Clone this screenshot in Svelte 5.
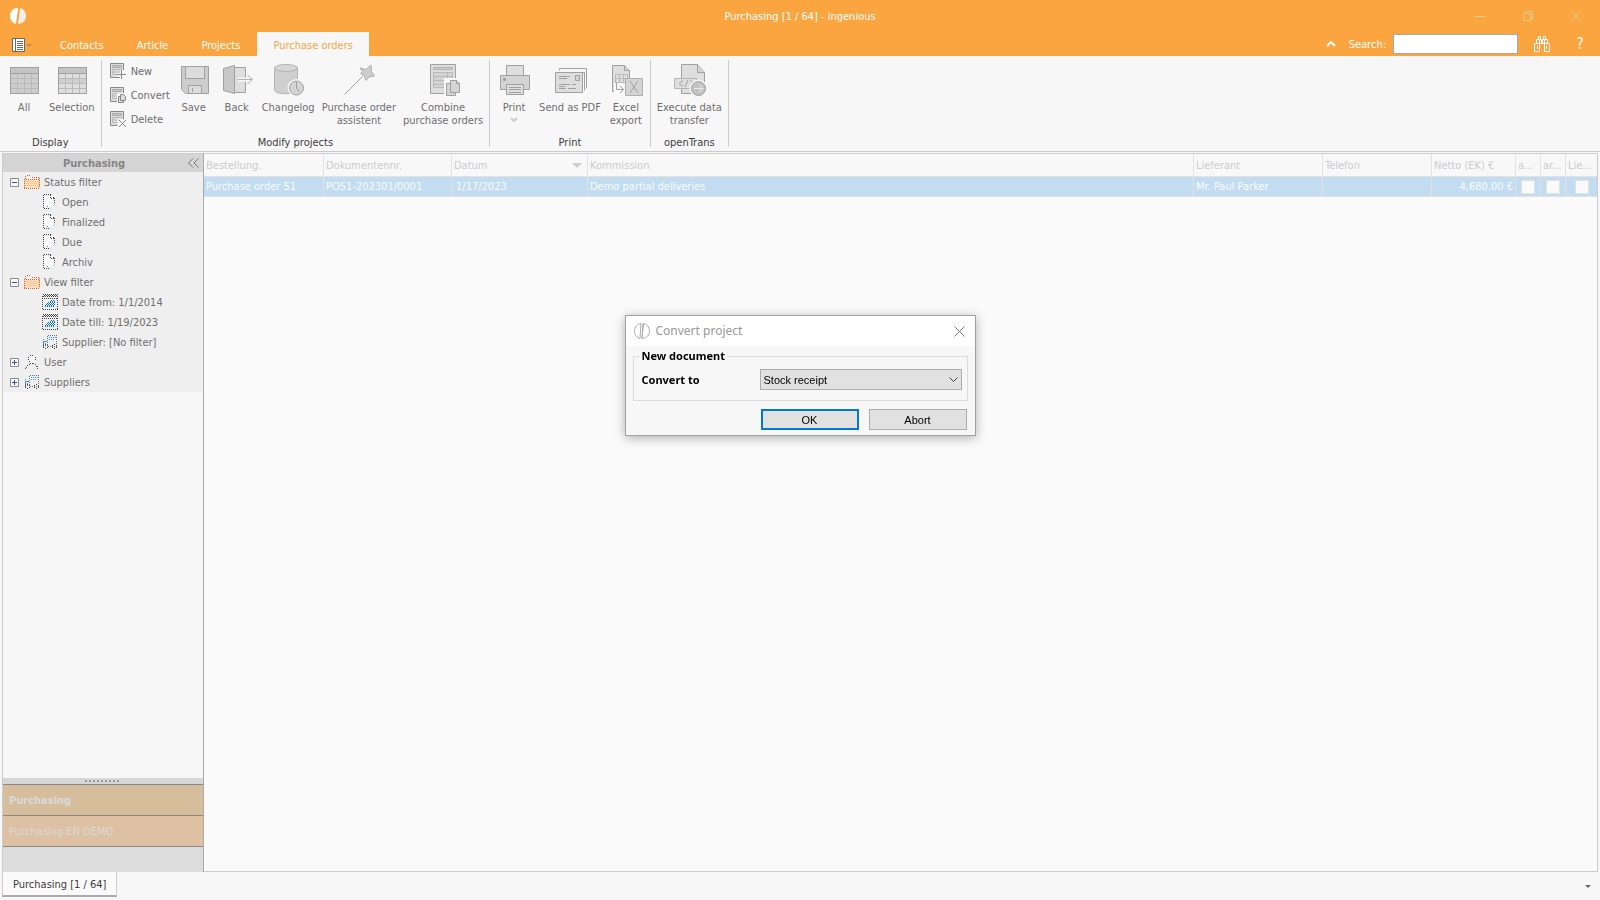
<script lang="ts">
  interface Tool {
    icon: string;
    lines: string[];
    menu?: boolean;
  }

  interface Group {
    title: string;
    small?: Tool[];
    tools: Tool[];
  }

  interface TreeNode {
    label: string;
    icon: string;
    level: number;
    open?: boolean;
  }

  const tabs = ["Contacts", "Article", "Projects", "Purchase orders"];
  let active_tab = $state("Purchase orders");
  let dialog_open = $state(true);
  let target = $state("Stock receipt");
  let search = $state("");

  const groups: Group[] = [
    {
      title: "Display",
      tools: [
        { icon: "all", lines: ["All"] },
        { icon: "selection", lines: ["Selection"] },
      ],
    },
    {
      title: "Modify projects",
      small: [
        { icon: "new", lines: ["New"] },
        { icon: "convert", lines: ["Convert"] },
        { icon: "delete", lines: ["Delete"] },
      ],
      tools: [
        { icon: "save", lines: ["Save"] },
        { icon: "back", lines: ["Back"] },
        { icon: "changelog", lines: ["Changelog"] },
        { icon: "wand", lines: ["Purchase order", "assistent"] },
        { icon: "combine", lines: ["Combine", "purchase orders"] },
      ],
    },
    {
      title: "Print",
      tools: [
        { icon: "print", lines: ["Print"], menu: true },
        { icon: "send", lines: ["Send as PDF"] },
        { icon: "excel", lines: ["Excel", "export"] },
      ],
    },
    {
      title: "openTrans",
      tools: [{ icon: "execute", lines: ["Execute data", "transfer"] }],
    },
  ];

  const tree: TreeNode[] = [
    { label: "Status filter", icon: "folder", level: 0, open: true },
    { label: "Open", icon: "doc", level: 1 },
    { label: "Finalized", icon: "doc", level: 1 },
    { label: "Due", icon: "doc", level: 1 },
    { label: "Archiv", icon: "doc", level: 1 },
    { label: "View filter", icon: "folder", level: 0, open: true },
    { label: "Date from: 1/1/2014", icon: "calendar", level: 1 },
    { label: "Date till: 1/19/2023", icon: "calendar", level: 1 },
    { label: "Supplier: [No filter]", icon: "truck", level: 1 },
    { label: "User", icon: "user", level: 0, open: false },
    { label: "Suppliers", icon: "truck", level: 0, open: false },
  ];

  const flags = ["a...", "ar...", "Lie..."];
</script>

{#snippet toolIcon(name: string)}
  <svg class="tool-icon" viewBox="0 0 32 32" width="32" height="32" fill="#d4d4d4" stroke="#a0a0a0" aria-hidden="true">
    {#if name === "all" || name === "selection"}
      <path d="M2.5 4.5h28v26h-28z" fill={name === "all" ? "#cdcdcd" : "#dedede"} />
      <path d="M3 5h27v5H3z" fill="#c4c4c4" stroke="none" />
      {#if name === "selection"}<path d="M3 15h27v5H3z" fill="#cfcfcf" stroke="none" />{/if}
      <path d="M3 15.5h27M3 20.5h27M3 25.5h27M9.5 11v19M16.5 11v19M23.5 11v19" stroke="#bababa" />
      <path d="M2.5 10.5h28M2.5 4.5h28v26h-28z" fill="none" />
    {:else if name === "save"}
      <path d="M3.5 3.5h27v27h-23l-4-4z" fill="#cdcdcd" />
      <path d="M7.5 3.5h19v12h-19z" fill="#dcdcdc" />
      <path d="M10.5 22.5h13v8h-13z" fill="#dcdcdc" />
      <path d="M14.5 25v4" />
    {:else if name === "back"}
      <path d="M13.5 4.5h11v25h-11z" fill="#dedede" />
      <path d="M2.5 5.5l11-3v28l-11-3z" fill="#c8c8c8" />
      <path d="M17 16.5h14" stroke="#f7f7f7" stroke-width="4" />
      <path d="M17 16.5h14M26.5 12l5 4.500l-5 4.500" fill="none" stroke="#b0b0b0" />
    {:else if name === "changelog"}
      <path d="M2.500 5v22c0 5 23 5 23 0V5" fill="#cfcfcf" stroke="#b4b4b4" />
      <ellipse cx="14" cy="5" rx="11.500" ry="3.500" fill="#d6d6d6" stroke="#b4b4b4" />
      <circle cx="24.500" cy="25" r="9" fill="#f7f7f7" stroke="none" />
      <circle cx="24.500" cy="25" r="7" />
      <path d="M24.500 19v6l3 4" fill="none" />
    {:else if name === "wand"}
      <path d="M1.500 31.500L20 13" fill="none" />
      <path d="M17 5l6 1.500L28 2l.5 6.500 3 4.500-5.500 1-3 3.500-2-5-3.500-2 2-2z" fill="#cdcdcd" stroke="#b0b0b0" />
    {:else if name === "combine"}
      <path d="M3.500 1.500h25v29h-25z" fill="#dedede" />
      <path d="M6.500 4.500h19v2h-19z" fill="#d0d0d0" stroke="#b0b0b0" />
      <path d="M6.500 9.500h19v15h-19zM6.500 13.500h19M6.500 17.500h19M6.500 21.500h19M20.500 9.500v15" stroke="#b8b8b8" />
      <path d="M17 15h17v18H17z" fill="#f7f7f7" stroke="none" />
      <path d="M19.500 20.500h9v12h-9z" />
      <path d="M23.500 17.500h6l3 3v9h-9zM29.500 17.500v3h3" />
    {:else if name === "print"}
      <path d="M8.500 2.500h17v11h-17z" fill="#dedede" />
      <path d="M2.500 12.500h29v14h-29z" />
      <path d="M5.500 15.500h2v2h-2z" fill="#999" />
      <path d="M8.500 21.500h17v10h-17z" fill="#dedede" />
      <path d="M11 24.500h12M11 26.500h12M11 29.500h12" />
    {:else if name === "send"}
      <path d="M5.500 7.500v-2h27v20M3.500 9.500h27v18" fill="none" />
      <path d="M1.500 9.500h27v20h-27z" fill="#dedede" />
      <path d="M21.500 12.500h4v5h-4zM5 13.500h11M5 15.500h8M5 21.500h11M5 23.500h6M14 25.500h8M5 25.500h7M18 21.500h4" />
    {:else if name === "excel"}
      <path d="M2.500 2.500h12l5 5v21h-17z" fill="#dedede" />
      <path d="M14.500 2.500v5h5" />
      <path d="M5.500 11.500h12v12h-12zM5.500 15.500h12M5.500 19.500h12M9.500 11.500v12M13.500 11.500v12" fill="none" stroke="#bcbcbc" />
      <path d="M4 20h11v13H4z" fill="#f7f7f7" stroke="none" />
      <path d="M6.500 20v6.500h7M10 23l3.500 3.500-3.500 3.500" fill="none" />
      <path d="M15.500 15.500h17v17h-17z" stroke="#b0b0b0" />
      <path d="M20 18l8 12M28 18l-8 12" />
    {:else if name === "execute"}
      <path d="M8.500 1.500h16l7 8v21h-23z" fill="#dedede" />
      <path d="M24.500 1.500v8h7" />
      <path d="M1.500 15.500h22v10h-22z" fill="#dedede" stroke="#b4b4b4" />
      <path d="M10 17.500l-4 3 4 3M15 17l-3 7M17 17.500l4 3-4 3" fill="none" />
      <circle cx="25.500" cy="25.500" r="9" fill="#f7f7f7" stroke="none" />
      <circle cx="25.500" cy="25.500" r="7" fill="#c2c2c2" />
      <path d="M21 25.500h9M26.500 22l3.500 3.500-3.500 3.500" fill="none" stroke="#eee" />
    {/if}
  </svg>
{/snippet}

{#snippet smallIcon(name: string)}
  <svg viewBox="0 0 16 16" width="16" height="16" fill="#dedede" stroke="#888" aria-hidden="true">
    <path d="M.5.5h13v14H.5z" />
    <path d="M2.500 2.500h9v2h-9z" fill="#c8c8c8" stroke="#aaa" />
    <path d="M2.500 6.500h9v5h-9zM2.500 9h9" stroke="#b8b8b8" />
    {#if name === "new"}
      <path d="M7 12h9M12 7v9" stroke="#f7f7f7" stroke-width="4" />
      <path d="M7 11.500h9M11.500 7v9" />
    {:else if name === "convert"}
      <path d="M7 6h9v10H7z" fill="#f7f7f7" stroke="none" />
      <path d="M8.500 9.500h5v6h-5z" />
      <path d="M10.500 7.500h3l2 2v4h-5z" />
    {:else}
      <path d="M7.500 8h9v9h-9z" fill="#f7f7f7" stroke="none" />
      <path d="M9 9l7 7M16 9l-7 7" />
    {/if}
  </svg>
{/snippet}

{#snippet treeIcon(name: string)}
  <svg viewBox="0 0 16 16" width="16" height="16" fill="none" stroke="#444" stroke-dasharray="1 1" shape-rendering="crispEdges" aria-hidden="true">
    {#if name === "folder"}
      <path d="M0 6h16v8H0z" fill="#fcdcb8" stroke="none" />
      <path d="M1 7.500h15M0 9.500h15M1 11.500h15" stroke="#fcb878" />
      <path d="M.5 14V5.500h15V14M0 14.500h16M1.500 5V2.500l2-1h3l2 2h7v2" stroke="#c8622c" />
    {:else if name === "doc"}
      <path d="M2 2h7l3 3v9H2z" fill="#f8f8f8" stroke="none" />
      <path d="M1.500 14V.5h7l4 4v7M8.500.5v4h4M1.500 14.500h5" />
      <path d="M5.500 12.500l2 2" stroke="#2490c8" />
      <path d="M8 15l7-7" stroke="#a8d4f0" />
    {:else if name === "calendar"}
      <path d="M.5.5h15v15H.5zM1 2.500h14M0 4.500h16M2 1.500h13" />
      <path d="M3 12.500h10M4 10.500h9M6 8.500h7M9 6.500h4M3 11.500h10M5 9.500h8M8 7.500h5" stroke="#1478b4" />
    {:else if name === "truck"}
      <path d="M5.500 11V1.500h9V12M6 12.500h9M1.500 13V7.500h3" stroke="#777" />
      <path d="M7 3.500h7M7 5.500h5M1.500 5v5M3.500 7v5" stroke="#2aa0d8" />
      <circle cx="3.500" cy="12.500" r="2" />
      <circle cx="12.500" cy="12.500" r="2" />
    {:else}
      <path d="M4.500 3.500l2-2h3l2 2v3l-2 3h-3l-2-3z" fill="#f8f8f8" />
      <path d="M1.500 15.500l2-4 3-2M9.500 9.500l3 2 2 4" stroke="#555" />
    {/if}
  </svg>
{/snippet}

<div class="window">
  <header class="top">
    <div class="titlebar">
      <svg class="logo" viewBox="0 0 16 16" width="16" height="16" fill="#fff" aria-hidden="true">
        <path d="M8 0C3 0 0 3.500 0 8c0 4 2.500 7 6 8z" />
        <path d="M10 0c4 1 6 4 6 8s-3 8-8 8z" fill="#f3eee6" />
      </svg>
      <div class="caption">Purchasing [1 / 64] - ingenious</div>
      <div class="window-buttons">
        <button aria-label="Minimize">
          <svg viewBox="0 0 10 10" width="10" height="10"><path d="M0 5.500h10" /></svg>
        </button>
        <button aria-label="Restore">
          <svg viewBox="0 0 10 10" width="10" height="10"><path d="M.5 2.500h7v7h-7zM2.500 2.500v-2h7v7h-2" /></svg>
        </button>
        <button aria-label="Close">
          <svg viewBox="0 0 10 10" width="10" height="10"><path d="M0 0l10 10M10 0L0 10" /></svg>
        </button>
      </div>
    </div>

    <div class="tabbar">
      <button class="app-menu" aria-label="Application menu">
        <svg viewBox="0 0 20 14" width="20" height="14" aria-hidden="true">
          <path d="M.5.500h12v13H.5z" fill="#fff" stroke="#666" />
          <path d="M3.500 1v12" stroke="#666" />
          <path d="M5 3.500h6M5 5.500h6M5 7.500h6M5 9.500h6M5 11.500h6" stroke="#666" />
          <path d="M14 6h6l-3 3z" fill="#b58a58" />
        </svg>
      </button>
      <nav class="tabs">
        {#each tabs as tab}
          <button class="tab" class:active={tab === active_tab} onclick={() => (active_tab = tab)}>{tab}</button>
        {/each}
      </nav>
      <div class="search">
        <button class="plain" aria-label="Collapse ribbon">
          <svg viewBox="0 0 10 6" width="10" height="6" fill="none" stroke="#fff" stroke-width="2"><path d="M1 5l4-4 4 4" /></svg>
        </button>
        <label for="search">Search:</label>
        <input id="search" type="text" bind:value={search} />
        <button class="plain find" aria-label="Find">
          <svg viewBox="0 0 16 16" width="16" height="16" fill="none" stroke="#fff">
            <path d="M.5 7.500h5v8h-5zM10.500 7.500h5v8h-5zM2.500 7.500v-4h3v4M10.500 7.500v-4h3v4M4.500 3.500v-3h2v3M9.500 3.500v-3h2v3M5.500 3.500h2v4h-2M10.500 3.500h-2v4h2M7 5.500h2M3.500 10v3M12.500 10v3" />
          </svg>
        </button>
        <button class="plain help" aria-label="Help">?</button>
      </div>
    </div>
  </header>

  <section class="ribbon">
    {#each groups as group}
      <div class="group">
        <div class="group-tools">
          {#if group.small}
            <div class="small-tools">
              {#each group.small as tool}
                <button class="small-tool">{@render smallIcon(tool.icon)}{tool.lines[0]}</button>
              {/each}
            </div>
          {/if}
          {#each group.tools as tool}
            <button class="tool">
              {@render toolIcon(tool.icon)}
              {#each tool.lines as line}
                <span>{line}</span>
              {/each}
              {#if tool.menu}
                <svg class="drop" viewBox="0 0 8 5" width="8" height="5" fill="none" stroke="#ccc" stroke-width="2"><path d="M1 1l3 3 3-3" /></svg>
              {/if}
            </button>
          {/each}
        </div>
        <div class="group-title">{group.title}</div>
      </div>
    {/each}
  </section>

  <main class="work">
    <aside class="sidebar">
      <div class="side-head">
        <span>Purchasing</span>
        <button class="plain" aria-label="Collapse panel">
          <svg viewBox="0 0 11 10" width="11" height="10" fill="none" stroke="#777"><path d="M5 .5L.5 5 5 9.500M10.500.5L6 5l4.500 4.500" /></svg>
        </button>
      </div>
      <ul class="tree">
        {#each tree as node}
          <li class:child={node.level === 1}>
            {#if node.level === 0}
              <button class="expander" aria-label={node.open ? "Collapse" : "Expand"}>
                <svg viewBox="0 0 9 9" width="9" height="9" fill="#f8f8f8" stroke="#8c8c8c">
                  <path d="M.5.5h8v8h-8z" />
                  <path d={node.open ? "M2 4.500h5" : "M2 4.500h5M4.500 2v5"} stroke="#3c50a0" />
                </svg>
              </button>
            {/if}
            {@render treeIcon(node.icon)}
            <span>{node.label}</span>
          </li>
        {/each}
      </ul>
      <div class="splitter">
        <svg viewBox="0 0 35 2" width="35" height="2"><path d="M0 1h35" stroke="#999" stroke-width="2" stroke-dasharray="2 2" /></svg>
      </div>
      <button class="nav-item current">Purchasing</button>
      <button class="nav-item">Purchasing EN DEMO</button>
      <div class="nav-foot"></div>
    </aside>

    <div class="grid">
      <table>
        <colgroup>
          <col class="c-order" />
          <col class="c-number" />
          <col class="c-date" />
          <col />
          <col class="c-supplier" />
          <col class="c-phone" />
          <col class="c-net" />
          <col class="c-flag" />
          <col class="c-flag" />
          <col class="c-last" />
        </colgroup>
        <thead>
          <tr>
            <th>Bestellung.</th>
            <th>Dokumentennr.</th>
            <th>
              <span class="sorted">
                Datum
                <svg viewBox="0 0 10 5" width="10" height="5" fill="#ccc" aria-hidden="true"><path d="M0 0h10L5 5z" /></svg>
              </span>
            </th>
            <th>Kommission</th>
            <th>Lieferant</th>
            <th>Telefon</th>
            <th>Netto (EK) €</th>
            {#each flags as flag}
              <th>{flag}</th>
            {/each}
          </tr>
        </thead>
        <tbody>
          <tr>
            <td>Purchase order 51</td>
            <td>PO51-202301/0001</td>
            <td class="date">1/17/2023</td>
            <td>Demo partial deliveries</td>
            <td>Mr. Paul Parker</td>
            <td></td>
            <td class="amount">4,680.00 €</td>
            {#each flags as flag}
              <td class="flag"><input type="checkbox" aria-label={flag} /></td>
            {/each}
          </tr>
        </tbody>
      </table>
    </div>
  </main>

  <footer class="docbar">
    <button class="doc-tab">Purchasing [1 / 64]</button>
    <button class="plain" aria-label="Open documents">
      <svg viewBox="0 0 6 3" width="6" height="3" fill="#666"><path d="M0 0h6L3 3z" /></svg>
    </button>
  </footer>
</div>

{#if dialog_open}
  <div class="overlay">
    <div class="dialog" role="dialog" aria-labelledby="dialog-title">
      <div class="dialog-head">
        <svg viewBox="0 0 16 16" width="16" height="16" fill="none" stroke="#aaa" aria-hidden="true">
          <path d="M7 .5C3 1 .5 4 .5 8s2.500 7 5.500 7.500zM9 .5c4 .5 6.500 3.500 6.500 7.500S13 15 8 15.500zM9.500.5L8 15" />
        </svg>
        <h2 id="dialog-title">Convert project</h2>
        <button class="plain" aria-label="Close dialog" onclick={() => (dialog_open = false)}>
          <svg viewBox="0 0 11 11" width="11" height="11" fill="none" stroke="#777"><path d="M.5.5l10 10M10.500.5l-10 10" /></svg>
        </button>
      </div>
      <fieldset>
        <legend>New document</legend>
        <label for="target">Convert to</label>
        <div class="select">
          <select id="target" bind:value={target}>
            <option>Stock receipt</option>
          </select>
          <svg viewBox="0 0 9 5" width="9" height="5" fill="none" stroke="#444" aria-hidden="true"><path d="M.5.5l4 4 4-4" /></svg>
        </div>
      </fieldset>
      <div class="actions">
        <button class="primary" onclick={() => (dialog_open = false)}>OK</button>
        <button onclick={() => (dialog_open = false)}>Abort</button>
      </div>
    </div>
  </div>
{/if}

<style>
  :global(body) {
    background: #f7f7f7;
  }

  .window {
    display: flex;
    flex-direction: column;
    height: 100vh;
    background: #f7f7f7;
    color: #6e6e6e;
    font: 11px/13px "DejaVu Sans Condensed", "DejaVu Sans", sans-serif;
  }

  button,
  input,
  select {
    box-sizing: border-box;
    margin: 0;
    font: inherit;
    color: inherit;
  }

  button {
    padding: 0;
    border: none;
    background: none;
  }

  svg {
    display: block;
    flex-shrink: 0;
  }

  .plain {
    display: flex;
    align-items: center;
    justify-content: center;
  }

  .top {
    background: #fba540;
    color: #fff;
  }

  .titlebar {
    display: grid;
    grid-template-columns: 1fr auto 1fr;
    align-items: center;
    height: 32px;
  }

  .logo {
    margin-left: 10px;
  }

  .window-buttons {
    display: flex;
    justify-content: flex-end;
  }

  .window-buttons button {
    display: flex;
    align-items: center;
    justify-content: center;
    width: 48px;
    height: 32px;
  }

  .window-buttons svg {
    fill: none;
    stroke: #fcc98a;
  }

  .tabbar {
    display: flex;
    height: 24px;
  }

  .app-menu {
    display: flex;
    align-items: center;
    width: 44px;
    padding: 6px 12px 4px;
  }

  .tabs {
    display: flex;
    gap: 1px;
    flex: 1;
  }

  .tab {
    padding: 2px 16px 0;
  }

  .tab.active {
    background: #f7f7f7;
    color: #fba540;
  }

  .search {
    display: flex;
    align-items: center;
    padding-right: 16px;
  }

  .search label {
    margin: 0 7px 0 13px;
  }

  .search input {
    width: 125px;
    height: 20px;
    padding: 0 4px;
    border: 1px solid #a8a8a8;
    background: #fff;
    color: #444;
  }

  .find {
    margin: 0 26px 0 16px;
  }

  .help {
    width: 8px;
    font-size: 15px;
  }

  .ribbon {
    display: flex;
    box-sizing: border-box;
    height: 96px;
    padding: 4px 0;
    border-bottom: 1px solid #ccc;
  }

  .group {
    display: flex;
    flex-direction: column;
    justify-content: space-between;
    padding: 0 3px;
    border-right: 1px solid #ccc;
  }

  .group-tools {
    display: flex;
    gap: 1px;
  }

  .group-title {
    line-height: 8px;
    text-align: center;
    color: #3c3c3c;
  }

  .small-tools {
    display: flex;
    flex-direction: column;
    width: 67px;
  }

  .small-tool {
    display: flex;
    align-items: center;
    gap: 5px;
    height: 24px;
    padding: 0 0 2px 5px;
  }

  .tool {
    display: flex;
    flex-direction: column;
    align-items: center;
    min-width: 42px;
    padding: 3px 3px 0;
    white-space: nowrap;
  }

  .tool-icon {
    margin-bottom: 6px;
    overflow: visible;
  }

  .drop {
    margin-top: 3px;
  }

  .work {
    display: flex;
    flex: 1;
    min-height: 0;
    padding: 1px 2px 0;
  }

  .sidebar {
    display: flex;
    flex-direction: column;
    width: 200px;
    border: 1px solid #ccc;
    border-right-color: #aaa;
    border-bottom: none;
  }

  .side-head {
    display: flex;
    align-items: center;
    height: 18px;
    padding-right: 4px;
    background: #d4d4d4;
    color: #858585;
    font-weight: bold;
  }

  .side-head span {
    flex: 1;
    padding-right: 3px;
    text-align: center;
  }

  .tree {
    flex: 1;
    margin: 0;
    padding: 0;
    list-style: none;
  }

  .tree li {
    display: flex;
    align-items: center;
    height: 20px;
    padding-left: 7px;
    background: #efefef;
  }

  .tree li.child {
    padding-left: 39px;
  }

  .tree span {
    margin-left: 4px;
  }

  .expander {
    margin-right: 5px;
  }

  .splitter {
    display: flex;
    align-items: center;
    justify-content: center;
    height: 6px;
    padding-right: 2px;
    background: #d6d6d6;
  }

  .nav-item {
    height: 31px;
    padding: 0 6px;
    border-top: 1px solid #888;
    background: #ddc1a2;
    color: #d9d9d9;
    text-align: left;
  }

  .nav-item.current {
    background: #d6be9d;
    font-weight: bold;
  }

  .nav-foot {
    height: 25px;
    border-top: 1px solid #888;
    background: #dcdcdc;
  }

  .grid {
    flex: 1;
    min-width: 0;
    border: 1px solid #ccc;
    border-left: none;
    background: #fafafa;
  }

  table {
    width: 100%;
    table-layout: fixed;
    border-collapse: separate;
    border-spacing: 0;
    color: #ccc;
  }

  th,
  td {
    box-sizing: border-box;
    padding: 0 2px;
    border-right: 1px solid #e2e2e2;
    text-align: left;
    font-weight: normal;
    white-space: nowrap;
    overflow: hidden;
  }

  th {
    height: 23px;
    border-bottom: 1px solid #e2e2e2;
    background: #f8f8f8;
  }

  th:last-child,
  td:last-child {
    border-right: none;
  }

  td {
    height: 20px;
    border-bottom: 1px solid #e2e2e2;
    background: #c2ddf1;
    color: #fafafa;
  }

  .c-order {
    width: 120px;
  }

  .c-number {
    width: 128px;
  }

  .c-date {
    width: 136px;
  }

  .c-supplier {
    width: 129px;
  }

  .c-phone {
    width: 109px;
  }

  .c-net {
    width: 84px;
  }

  .c-flag {
    width: 25px;
  }

  .c-last {
    width: 31px;
  }

  .sorted {
    display: flex;
    align-items: center;
    justify-content: space-between;
    padding-right: 3px;
  }

  .date {
    padding-left: 4px;
  }

  .amount {
    text-align: right;
  }

  .flag {
    padding: 0;
    text-align: center;
  }

  .flag input {
    appearance: none;
    display: block;
    width: 14px;
    height: 14px;
    margin: 0 auto;
    border: 1px solid #e2e2e2;
    background: #fafafa;
  }

  .docbar {
    display: flex;
    align-items: flex-start;
    justify-content: space-between;
    height: 28px;
    padding: 0 9px 0 2px;
  }

  .doc-tab {
    height: 25px;
    padding: 2px 10px 0;
    border: 1px solid #ccc;
    border-top: none;
    border-bottom: 2px solid #aaa;
    background: #fafafa;
    color: #3c3c3c;
  }

  .docbar .plain {
    height: 28px;
  }

  .overlay {
    position: fixed;
    inset: 0;
    display: flex;
    align-items: flex-start;
    justify-content: center;
    padding-top: 35vh;
    color: #000;
    font: 11px/16px "Noto Sans", sans-serif;
  }

  .dialog {
    box-sizing: border-box;
    width: 351px;
    border: 1px solid #a0a0a0;
    background: #f7f7f7;
    box-shadow: 0 2px 10px rgba(0, 0, 0, 0.3);
  }

  .dialog-head {
    display: flex;
    align-items: center;
    gap: 6px;
    height: 30px;
    padding: 0 10px 0 8px;
    background: #fff;
    color: #999;
  }

  h2 {
    flex: 1;
    margin: 0;
    font: inherit;
    font-size: 12px;
  }

  fieldset {
    display: flex;
    align-items: center;
    justify-content: space-between;
    margin: 2px 7px 0;
    padding: 5px 5px 10px 8px;
    border: 1px solid #dcdcdc;
    font-weight: bold;
  }

  legend {
    padding: 0 2px;
    margin-left: -2px;
  }

  .select {
    position: relative;
    width: 202px;
  }

  .select svg {
    position: absolute;
    right: 4px;
    top: 8px;
    pointer-events: none;
  }

  select,
  .actions button {
    height: 21px;
    border: 1px solid #adadad;
    border-radius: 0;
    background: #e1e1e1;
    color: #000;
    font: 11px/16px "Liberation Sans", sans-serif;
  }

  select {
    display: block;
    appearance: none;
    width: 100%;
    padding: 0 3px;
  }

  .actions {
    display: flex;
    justify-content: flex-end;
    gap: 10px;
    padding: 8px 8px 5px;
  }

  .actions button {
    width: 98px;
  }

  .actions .primary {
    border: 2px solid #0078d7;
  }
</style>
